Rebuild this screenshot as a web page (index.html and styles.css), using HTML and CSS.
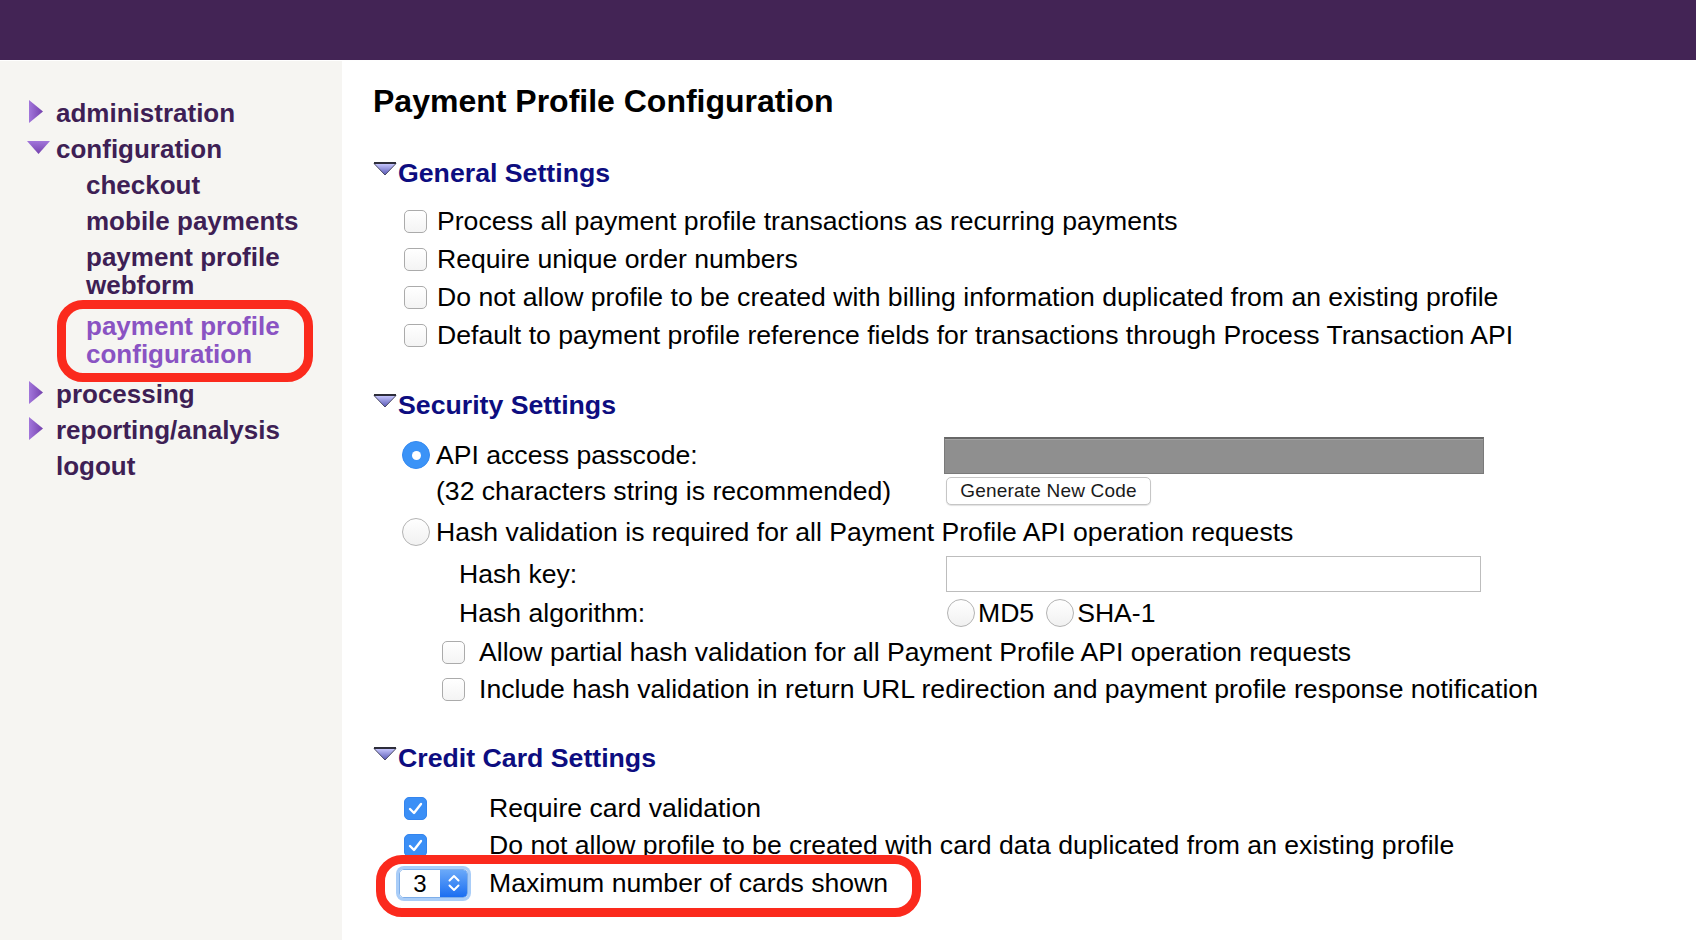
FILE: index.html
```html
<!DOCTYPE html>
<html lang="en">
<head>
  <meta charset="UTF-8" />
  <title>Payment Profile Configuration</title>
  <link rel="stylesheet" href="styles.css">
</head>
<body>
  <div class="topbar"></div>

  <div class="layout">
    <nav class="sidebar">
      <ul class="menu">
        <li class="menu-item">
          <span class="arrow"><svg class="arrow-right" width="14" height="23" viewBox="0 0 14 23"><defs><linearGradient id="ar1" x1="0" y1="0" x2="1" y2="0"><stop offset="0" stop-color="#a276db"/><stop offset="1" stop-color="#7441ad"/></linearGradient></defs><polygon points="0,0 14,11.5 0,23" fill="url(#ar1)"/></svg></span>
          <a href="#">administration</a>
        </li>
        <li class="menu-item">
          <span class="arrow"><svg class="arrow-down" width="23" height="13" viewBox="0 0 23 13"><defs><linearGradient id="ad1" x1="0" y1="0" x2="0" y2="1"><stop offset="0" stop-color="#a276db"/><stop offset="1" stop-color="#7441ad"/></linearGradient></defs><polygon points="0,0 23,0 11.5,13" fill="url(#ad1)"/></svg></span>
          <a href="#">configuration</a>
        </li>
        <li class="menu-item sub"><a href="#">checkout</a></li>
        <li class="menu-item sub"><a href="#">mobile payments</a></li>
        <li class="menu-item sub"><a href="#">payment profile webform</a></li>
        <li class="menu-item sub current"><a href="#">payment profile configuration</a></li>
        <li class="menu-item">
          <span class="arrow"><svg class="arrow-right" width="14" height="23" viewBox="0 0 14 23"><defs><linearGradient id="ar2" x1="0" y1="0" x2="1" y2="0"><stop offset="0" stop-color="#a276db"/><stop offset="1" stop-color="#7441ad"/></linearGradient></defs><polygon points="0,0 14,11.5 0,23" fill="url(#ar2)"/></svg></span>
          <a href="#">processing</a>
        </li>
        <li class="menu-item">
          <span class="arrow"><svg class="arrow-right" width="14" height="23" viewBox="0 0 14 23"><defs><linearGradient id="ar3" x1="0" y1="0" x2="1" y2="0"><stop offset="0" stop-color="#a276db"/><stop offset="1" stop-color="#7441ad"/></linearGradient></defs><polygon points="0,0 14,11.5 0,23" fill="url(#ar3)"/></svg></span>
          <a href="#">reporting/analysis</a>
        </li>
        <li class="menu-item">
          <span class="arrow"></span>
          <a href="#">logout</a>
        </li>
      </ul>
    </nav>

    <main class="content">
      <h1>Payment Profile Configuration</h1>

      <!-- general -->
      <section class="settings general">
        <h2 class="section-title"><svg width="24" height="14" viewBox="0 0 24 14"><defs><linearGradient id="tg1" x1="0" y1="0" x2="0" y2="1"><stop offset="0" stop-color="#c9c9ff"/><stop offset="1" stop-color="#5656b4"/></linearGradient></defs><polygon points="1,1.5 23,1.5 12,13" fill="url(#tg1)" stroke="#4a4a66" stroke-width="1"/><line x1="1" y1="1" x2="23" y2="1" stroke="#2d2d3a" stroke-width="2"/></svg>General Settings</h2>
        <div class="check-row"><span class="check"></span>Process all payment profile transactions as recurring payments</div>
        <div class="check-row"><span class="check"></span>Require unique order numbers</div>
        <div class="check-row"><span class="check"></span>Do not allow profile to be created with billing information duplicated from an existing profile</div>
        <div class="check-row"><span class="check"></span>Default to payment profile reference fields for transactions through Process Transaction API</div>
      </section>

      <!-- security -->
      <section class="settings security">
        <h2 class="section-title"><svg width="24" height="14" viewBox="0 0 24 14"><defs><linearGradient id="tg2" x1="0" y1="0" x2="0" y2="1"><stop offset="0" stop-color="#c9c9ff"/><stop offset="1" stop-color="#5656b4"/></linearGradient></defs><polygon points="1,1.5 23,1.5 12,13" fill="url(#tg2)" stroke="#4a4a66" stroke-width="1"/><line x1="1" y1="1" x2="23" y2="1" stroke="#2d2d3a" stroke-width="2"/></svg>Security Settings</h2>

        <div class="sec-row row-api">
          <div class="sec-label"><span class="radio on"></span>API access passcode:</div>
          <input class="passcode" type="text" value="" readonly>
        </div>
        <div class="sec-row row-hint">
          <div class="sec-label indent-hint">(32 characters string is recommended)</div>
          <button class="gen-btn" type="button">Generate New Code</button>
        </div>
        <div class="sec-row row-hash">
          <div class="sec-label wide"><span class="radio"></span>Hash validation is required for all Payment Profile API operation requests</div>
        </div>
        <div class="sec-row row-key">
          <div class="sec-label indent-sub">Hash key:</div>
          <input class="hash-key" type="text">
        </div>
        <div class="sec-row row-algo">
          <div class="sec-label indent-sub">Hash algorithm:</div>
          <div class="algo">
            <span class="radio"></span><span class="algo-name">MD5</span>
            <span class="radio"></span><span class="algo-name">SHA-1</span>
          </div>
        </div>
        <div class="sec-row row-partial">
          <div class="sec-label wide indent-check"><span class="check"></span>Allow partial hash validation for all Payment Profile API operation requests</div>
        </div>
        <div class="sec-row row-include">
          <div class="sec-label wide indent-check"><span class="check"></span>Include hash validation in return URL redirection and payment profile response notification</div>
        </div>
      </section>

      <!-- credit card -->
      <section class="settings credit">
        <h2 class="section-title"><svg width="24" height="14" viewBox="0 0 24 14"><defs><linearGradient id="tg3" x1="0" y1="0" x2="0" y2="1"><stop offset="0" stop-color="#c9c9ff"/><stop offset="1" stop-color="#5656b4"/></linearGradient></defs><polygon points="1,1.5 23,1.5 12,13" fill="url(#tg3)" stroke="#4a4a66" stroke-width="1"/><line x1="1" y1="1" x2="23" y2="1" stroke="#2d2d3a" stroke-width="2"/></svg>Credit Card Settings</h2>

        <div class="cc-row row-a">
          <div class="cc-control"><span class="check checked"><svg width="23" height="23" viewBox="0 0 23 23"><path d="M6 12 L10 16 L17 7" fill="none" stroke="#fff" stroke-width="2.4" stroke-linecap="round" stroke-linejoin="round"/></svg></span></div>
          Require card validation
        </div>
        <div class="cc-row row-b">
          <div class="cc-control"><span class="check checked"><svg width="23" height="23" viewBox="0 0 23 23"><path d="M6 12 L10 16 L17 7" fill="none" stroke="#fff" stroke-width="2.4" stroke-linecap="round" stroke-linejoin="round"/></svg></span></div>
          Do not allow profile to be created with card data duplicated from an existing profile
        </div>
        <div class="cc-row row-c marked">
          <div class="cc-control">
            <span class="number-input">
              <span class="num-value">3</span>
              <span class="num-spin"><svg width="14" height="24" viewBox="0 0 14 24"><path d="M2.5 9.5 L7 5 L11.5 9.5 M2.5 14.5 L7 19 L11.5 14.5" fill="none" stroke="#fff" stroke-width="2" stroke-linecap="round" stroke-linejoin="round"/></svg></span>
            </span>
          </div>
          Maximum number of cards shown
        </div>
      </section>
    </main>
  </div>
</body>
</html>
```

FILE: styles.css
```css
body {
  margin: 0;
  font-family: "Liberation Sans", Arial, sans-serif;
  color: #000;
  background-color: #fff;
}

.topbar {
  height: 60px;
  background-color: #432455;
}

.layout {
  display: flex;
  margin-top: 1px;
  min-height: 879px;
}

/* sidebar */
.sidebar {
  width: 342px;
  flex-shrink: 0;
  box-sizing: border-box;
  padding-top: 38px;
  background-color: #f6f5f2;
}

.menu {
  list-style: none;
  margin: 0;
  padding: 0 20px 0 25px;
}

.menu-item {
  display: flex;
  font-size: 26px;
  font-weight: bold;
  line-height: 28px;
  margin-bottom: 8px;
}

.menu-item a {
  color: #3e1f55;
  text-decoration: none;
}

.arrow {
  width: 31px;
  height: 28px;
  flex-shrink: 0;
  display: flex;
  align-items: center;
}

.arrow-right {
  margin-left: 4px;
  margin-top: -3px;
}

.arrow-down {
  margin-left: 2px;
  margin-top: -4px;
}

.menu-item.sub {
  padding-left: 61px;
}

.menu-item.current {
  position: relative;
  padding-top: 5px;
  padding-bottom: 4px;
}

.menu-item.current a {
  color: #8a53c3;
}

.menu-item.current::after {
  content: "";
  position: absolute;
  left: 32px;
  top: -7px;
  width: 256px;
  height: 82px;
  box-sizing: border-box;
  border: 9px solid #fb2a1d;
  border-radius: 26px;
}

/* main */
.content {
  flex: 1;
  padding: 21px 0 0 31px;
}

h1 {
  margin: 0;
  font-size: 32px;
  line-height: 38px;
  font-weight: bold;
}

.settings {
  font-size: 26.6px;
}

.section-title {
  display: flex;
  align-items: flex-start;
  margin: 0;
  font-size: 26.7px;
  line-height: 30px;
  font-weight: bold;
  color: #0d0d80;
}

.section-title svg {
  margin-top: 4px;
  margin-right: 1px;
}

.general {
  margin-top: 38px;
}

.general .section-title {
  margin-bottom: 14px;
}

.check-row {
  display: flex;
  align-items: center;
  height: 38px;
  padding-left: 31px;
  white-space: nowrap;
}

.check {
  width: 23px;
  height: 23px;
  flex-shrink: 0;
  box-sizing: border-box;
  margin-right: 10px;
  border: 1px solid #ababab;
  border-radius: 5px;
  background: linear-gradient(#fff, #f4f4f4);
}

.check.checked {
  border-color: #3485ee;
  background: #3b8ff6;
}

.check.checked svg {
  display: block;
  margin: -1px;
}

.radio {
  width: 28px;
  height: 28px;
  flex-shrink: 0;
  box-sizing: border-box;
  margin-right: 6px;
  border: 1px solid #b3b3b3;
  border-radius: 50%;
  background: linear-gradient(#fff, #f1f1f1);
}

.radio.on {
  display: flex;
  align-items: center;
  justify-content: center;
  border-color: #3489f0;
  background: #3b93f7;
}

.radio.on::after {
  content: "";
  width: 9px;
  height: 9px;
  border-radius: 50%;
  background-color: #fff;
}

/* security */
.security {
  margin-top: 36px;
}

.security .section-title {
  margin-bottom: 16px;
}

.sec-row {
  display: flex;
  align-items: center;
  padding-left: 29px;
  white-space: nowrap;
}

.sec-label {
  width: 542px;
  flex-shrink: 0;
  display: flex;
  align-items: center;
}

.sec-label.wide {
  width: auto;
}

.row-api { height: 38px; }
.row-hint { height: 34px; }
.row-hash { height: 48px; }
.row-key { height: 36px; }
.row-algo { height: 42px; }
.row-partial { height: 36px; }
.row-include { height: 38px; }

.indent-hint {
  padding-left: 34px;
  box-sizing: border-box;
}

.indent-sub {
  padding-left: 57px;
  box-sizing: border-box;
}

.indent-check {
  padding-left: 40px;
}

.indent-check .check {
  margin-right: 14px;
}

.passcode {
  width: 540px;
  height: 37px;
  box-sizing: border-box;
  border: 1px solid #7a7a7a;
  border-top: 2px solid #676767;
  background-color: #8f8f8f;
  box-shadow: inset 0 1px 0 #a4a4a4;
}

.gen-btn {
  width: 205px;
  height: 28px;
  margin-left: 2px;
  padding: 0;
  font-family: "Liberation Sans", Arial, sans-serif;
  font-size: 19px;
  letter-spacing: 0.2px;
  color: #1a1a1a;
  background-color: #fff;
  border: 1px solid #c6c6c6;
  border-radius: 5px;
  box-shadow: 0 1px 1px rgba(0,0,0,0.12);
}

.hash-key {
  width: 535px;
  height: 36px;
  margin-left: 2px;
  box-sizing: border-box;
  border: 1px solid #bdbdbd;
  background-color: #fff;
}

.algo {
  display: flex;
  align-items: center;
  margin-left: 3px;
}

.algo .radio {
  margin-right: 3px;
}

.algo-name {
  margin-right: 12px;
}

/* credit card */
.credit {
  margin-top: 35px;
}

.credit .section-title {
  margin-bottom: 16px;
}

.cc-row {
  display: flex;
  align-items: center;
  padding-left: 31px;
  white-space: nowrap;
}

.row-a { height: 38px; }
.row-b { height: 36px; }
.row-c { height: 40px; }

.cc-control {
  width: 85px;
  flex-shrink: 0;
  display: flex;
  align-items: center;
}

.number-input {
  display: flex;
  width: 69px;
  height: 29px;
  margin-left: -5px;
  box-sizing: border-box;
  border: 1px solid #7eaee9;
  border-radius: 5px;
  overflow: hidden;
  box-shadow: 0 0 0 3px #a9cdf8;
}

.num-value {
  width: 40px;
  font-size: 24px;
  line-height: 27px;
  text-align: center;
  background-color: #fff;
}

.num-spin {
  flex: 1;
  display: flex;
  align-items: center;
  justify-content: center;
  background: linear-gradient(#6aa9f9, #1b6ef1);
}

.marked {
  position: relative;
}

.marked::after {
  content: "";
  position: absolute;
  left: 3px;
  top: -8px;
  width: 545px;
  height: 62px;
  box-sizing: border-box;
  border: 9px solid #fb2a1d;
  border-radius: 26px;
}
```
